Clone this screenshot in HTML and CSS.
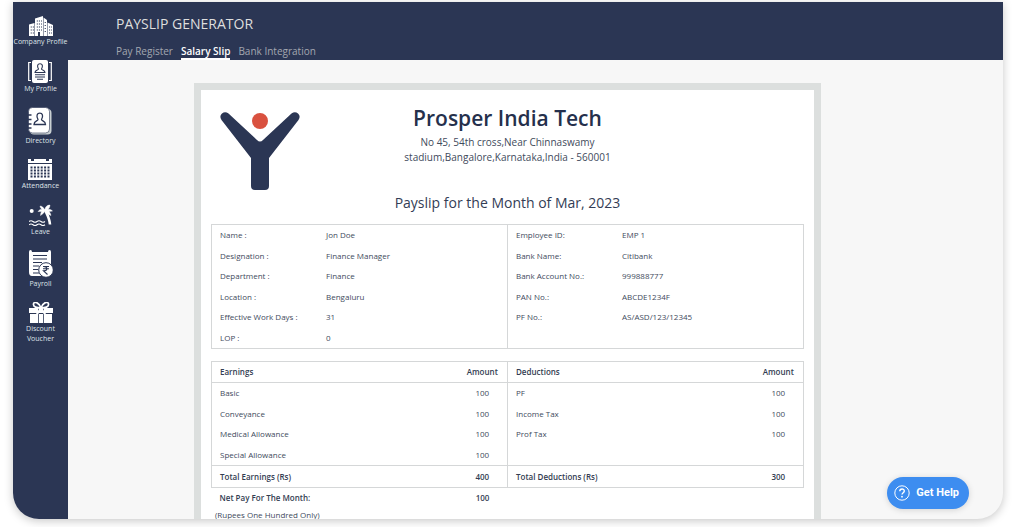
FILE: index.html
```html
<!DOCTYPE html>
<html lang="en">
<head>
<meta charset="utf-8">
<meta name="viewport" content="width=device-width, initial-scale=1">
<title>Payslip Generator</title>
<link rel="stylesheet" href="styles.css">
</head>
<body>
<div class="app">
  <nav class="sidebar" aria-label="Main">
    <a href="#" class="side-link">
      <svg width="24" height="20" viewBox="0 0 24 20" fill="#fff"><path d="M0 20V8.500L5.500 7v13zM6 20V2.500L14 0v20h-3v-4H9v4zM14.500 20V1.500L18 4v16zM18.500 20V6.500L24 9v11z"/><path d="M7.800 5H13M7.800 8H13M7.800 11H13M7.800 14H13M1.700 11H5M1.700 14H5M1.700 17H5M20 11h3M20 14h3M20 17h3M15.700 6.500H17M15.700 9.500H17M15.700 12.500H17M15.700 15.500H17" stroke="#2b3654" stroke-width="1.100" stroke-dasharray="1.100 1"/></svg>
      <span>Company Profile</span></a>
    <a href="#" class="side-link">
      <svg width="24" height="23" viewBox="0 0 24 23" fill="none"><rect x="4" width="16" height="23" rx="2" fill="#fff"/><path d="M3 2.500H.7v18H3M21 2.500h2.300v18H21" stroke="#fff" stroke-width="1.200"/><path d="M10.500 9C8.800 6 9.500 3.800 12 3.800S15.200 6 13.500 9c0 1.200 3.500 1 3.500 3.500H7c0-2.500 3.500-2.300 3.500-3.500zM7 14.800h10M7 17h10M9 19.200h6" stroke="#2b3654" stroke-width="1.100"/></svg>
      <span>My Profile</span></a>
    <a href="#" class="side-link">
      <svg width="24" height="28" viewBox="0 0 24 28" fill="none"><rect x="2" y="2" width="21.500" height="25.500" rx="4" fill="#c9d0d2"/><rect x=".5" y=".5" width="21" height="25.500" rx="4" fill="#fff" stroke="#2b3654" stroke-width=".6"/><path d="M0 8h3.500M0 12.500h3.500M0 17h3.500M0 21h3.500" stroke="#2b3654" stroke-width="1.500"/><path d="M10 12.500C8 9 9 6.200 11.800 6.200S15.500 9 13.500 12.500c0 1.700 4 1.300 4 5H6c0-3.700 4-3.300 4-5z" stroke="#2b3654" stroke-width="1.300"/></svg>
      <span>Directory</span></a>
    <a href="#" class="side-link">
      <svg width="24" height="21" viewBox="0 0 24 21"><path d="M0 0h3v2h3V0h12v2h3V0h3v4H0zM0 5h24v16H0z" fill="#fff"/><path d="M2.500 8.500H22M2.500 11.500H22M2.500 14.500H22M2.500 17.500H22" stroke="#2b3654" stroke-width="2" stroke-dasharray="2 1.400"/></svg>
      <span>Attendance</span></a>
    <a href="#" class="side-link">
      <svg width="24" height="22" viewBox="0 0 24 22" fill="none" stroke="#fff"><circle cx="2.700" cy="7" r="2" fill="#fff" stroke="none"/><path d="M16 6c2 4 4.500 8 5 14.500" stroke-width="2.600"/><path d="M16 6c-3-2-5-1-7 1.500 3 .2 5 0 7-1.500zM16 6c-3 0-4.500 2-4.500 5.500C14 10 15.500 8.500 16 6zM16 6c-1.500-2.500-3-4-5-4 0 2 2 4 5 4zM16 6c0-3 2-5 5-5 0 3-2 5-5 5zM16 6c3-1.500 6-1 7.500 1-3 .8-5.500.5-7.500-1zM16 6c3 0 5.500 2 6 5.500-3-.5-5-2.500-6-5.500z" fill="#fff" stroke-width=".4"/><path d="M0 17.500q2-1.500 4 0t4 0 4 0 4 0M0 20.800q2-1.500 4 0t4 0 4 0 4 0" stroke-width="1.100"/></svg>
      <span>Leave</span></a>
    <a href="#" class="side-link">
      <svg width="24" height="28" viewBox="0 0 24 28" fill="none"><path d="M0 2Q0 0 1.500 0T3 2h16q0-2 1.500-2T22 2v19q0 5-4 5H3q-3 0-3-4z" fill="#fff"/><path d="M4 5.500h14M4 9h14M4 12.500h9M4 16h6M4 19.500h5M4 23h6" stroke="#2b3654" stroke-width="1.200"/><circle cx="17" cy="20" r="7.300" fill="#fff" stroke="#2b3654"/><path d="M14 16.500h6M14 18.800h6M14.500 16.500c4.500 0 4.500 4.300 0 4.300l4 3.700" stroke="#2b3654" stroke-width="1.100"/></svg>
      <span>Payroll</span></a>
    <a href="#" class="side-link">
      <svg width="24" height="21" viewBox="0 0 24 21" fill="none"><path d="M0 6h24v5H0zM1 12h22v9H1z" fill="#fff"/><path d="M9.500 6v15M14.500 6v15" stroke="#2b3654" stroke-width=".8"/><path d="M12 6C10 0 5-1 4.500 2S8 6 12 6zM12 6c2-6 7-7 7.500-4S16 6 12 6z" fill="#2b3654" stroke="#fff" stroke-width="1.700"/><path d="M12 6l-4.500 7M12 6l4.500 7" stroke="#fff" stroke-width="2"/></svg>
      <span>Discount Voucher</span></a>
  </nav>
  <div class="main">
    <header class="topbar">
      <h1 class="page-title">PAYSLIP GENERATOR</h1>
      <nav class="tabs" aria-label="Sections">
        <a href="#" class="tab">Pay Register</a>
        <a href="#" class="tab tab-active" aria-current="page">Salary Slip</a>
        <a href="#" class="tab">Bank Integration</a>
      </nav>
    </header>
    <main class="content">
      <article class="sheet">
        <div class="sheet-head">
          <svg class="logo" width="80" height="79" viewBox="0 0 80 79" role="img" aria-label="Company logo"><path d="M1.500 8Q-1 4 2 1.500T8.500 1.500L37 28Q40 31 43 28L71.500 1.500Q75 -1 78 1.500T78.500 8L49 46V74Q49 78 45 78H35Q31 78 31 74V46Z" fill="#2b3654"/><circle cx="40" cy="9" r="8" fill="#d9513f"/></svg>
          <div class="company">
            <h2 class="company-name">Prosper India Tech</h2>
            <p class="address">No 45, 54th cross,Near Chinnaswamy<br>stadium,Bangalore,Karnataka,India - 560001</p>
          </div>
        </div>
        <h3 class="period">Payslip for the Month of Mar, 2023</h3>
        <table class="info">
          <colgroup><col class="c-label"><col class="c-value"><col class="c-label"><col class="c-value"></colgroup>
          <tbody>
            <tr><th scope="row">Name :</th><td>Jon Doe</td><th scope="row">Employee ID:</th><td>EMP 1</td></tr>
            <tr><th scope="row">Designation :</th><td>Finance Manager</td><th scope="row">Bank Name:</th><td>Citibank</td></tr>
            <tr><th scope="row">Department :</th><td>Finance</td><th scope="row">Bank Account No.:</th><td>999888777</td></tr>
            <tr><th scope="row">Location :</th><td>Bengaluru</td><th scope="row">PAN No.:</th><td>ABCDE1234F</td></tr>
            <tr><th scope="row">Effective Work Days :</th><td>31</td><th scope="row">PF No.:</th><td>AS/ASD/123/12345</td></tr>
            <tr><th scope="row">LOP :</th><td>0</td><th></th><td></td></tr>
          </tbody>
        </table>
        <table class="pay">
          <colgroup><col><col class="c-amount"><col><col class="c-amount"></colgroup>
          <thead>
            <tr><th>Earnings</th><th>Amount</th><th>Deductions</th><th>Amount</th></tr>
          </thead>
          <tbody>
            <tr><td>Basic</td><td>100</td><td>PF</td><td>100</td></tr>
            <tr><td>Conveyance</td><td>100</td><td>Income Tax</td><td>100</td></tr>
            <tr><td>Medical Allowance</td><td>100</td><td>Prof Tax</td><td>100</td></tr>
            <tr><td>Special Allowance</td><td>100</td><td></td><td></td></tr>
            <tr class="total"><td>Total Earnings (Rs)</td><td>400</td><td>Total Deductions (Rs)</td><td>300</td></tr>
          </tbody>
          <tfoot>
            <tr><td>Net Pay For The Month:</td><td>100</td><td></td><td></td></tr>
          </tfoot>
        </table>
        <p class="words">(Rupees One Hundred Only)</p>
      </article>
    </main>
  </div>
  <button type="button" class="help">
    <svg width="16" height="16" viewBox="0 0 16 16" fill="none" stroke="#fff" aria-hidden="true"><circle cx="8" cy="8" r="7.200"/><path d="M5.800 6.300C5.800 3.200 10.300 3.300 10.300 6c0 1.700-2.300 1.800-2.300 3.600" stroke-width="1.400"/><circle cx="8" cy="11.700" r=".9" fill="#fff" stroke="none"/></svg>
    Get Help
  </button>
</div>
</body>
</html>
```
FILE: styles.css
```css
* { box-sizing: border-box; }

body {
  margin: 0;
  height: 100vh;
  padding: 2px 21px 8px 13px;
  background: #fff;
  color: #414a5c;
  font-family: "Open Sans", "Noto Sans", sans-serif;
  font-size: 8px;
}

h1, h2, h3, p { margin: 0; font-weight: 400; }
a { color: inherit; text-decoration: none; }

.app {
  position: relative;
  display: flex;
  height: 100%;
  overflow: hidden;
  border-radius: 0 0 26px 26px;
  box-shadow: 0 2px 10px rgba(0, 0, 0, .22);
  background: #f7f7f7;
}

.sidebar {
  flex: 0 0 55px;
  display: flex;
  flex-direction: column;
  align-items: center;
  gap: 13px;
  padding-top: 14px;
  background: #2b3654;
}

.side-link {
  display: flex;
  flex-direction: column;
  align-items: center;
  gap: 1px;
  color: #dfe2e8;
  font-size: 7px;
  line-height: 10px;
  text-align: center;
}

.main {
  flex: 1;
  min-width: 0;
  display: flex;
  flex-direction: column;
}

.topbar {
  padding: 12px 48px 0;
  background: #2b3654;
}

.page-title {
  color: #dedede;
  font-size: 14px;
  line-height: 20px;
}

.tabs {
  display: flex;
  gap: 8px;
  margin-top: 10px;
  color: #a3a7b0;
  font-size: 10px;
  line-height: 14px;
}

.tab { border-bottom: 2px solid transparent; }
.tab-active { color: #fff; font-weight: 600; border-color: #fff; }

.content {
  flex: 1;
  min-height: 0;
  overflow-y: auto;
  scrollbar-width: none;
  padding: 23px 182px 24px 126px;
}

.sheet {
  border: 7px solid #dcdfde;
  background: #fff;
  padding: 14px 10px 24px;
}

.sheet-head {
  display: grid;
  grid-template-columns: 1fr auto 1fr;
  padding-left: 9px;
  padding-right: 9px;
}

.logo { margin-top: 8px; }
.company { text-align: center; }
.company-name { color: #25304c; font-size: 21px; font-weight: 600; line-height: 28px; }
.address { margin-top: 3px; font-size: 10px; line-height: 15px; }

.period {
  margin-top: 2px;
  color: #333d55;
  font-size: 14px;
  line-height: 20px;
  text-align: center;
}

table {
  width: 100%;
  border-collapse: collapse;
  table-layout: fixed;
  line-height: 12px;
}

th, td { padding: 4px 8px; text-align: left; }

.info { height: 125px; margin-top: 11px; border: 1px solid #d5d7d8; }
.info th { font-weight: 400; }
.info td:nth-child(2) { border-right: 1px solid #d5d7d8; }
.c-label { width: 18%; }
.c-value { width: 32%; }

.pay { margin-top: 12px; height: 147px; }
.pay th, .total td { border-top: 1px solid #d5d7d8; border-bottom: 1px solid #d5d7d8; }
.pay th:nth-child(odd), .pay tbody td:nth-child(odd) { border-left: 1px solid #d5d7d8; }
.pay th:last-child, .pay tbody td:last-child { border-right: 1px solid #d5d7d8; }
.pay th:nth-child(even), .pay td:nth-child(even) { text-align: center; }
.pay th, .total td, .pay tfoot td { color: #333d52; font-weight: 600; }
.c-amount { width: 50px; }

.words { padding-left: 4px; line-height: 14px; }

.help {
  position: absolute;
  right: 34px;
  bottom: 10px;
  display: flex;
  align-items: center;
  gap: 6px;
  height: 32px;
  padding: 0 10px 0 7px;
  border: 0;
  border-radius: 16px;
  background: #3d8df0;
  box-shadow: 0 1px 6px rgba(0, 0, 0, .15);
  color: #fff;
  font: 700 11px/16px Roboto, sans-serif;
}
```
